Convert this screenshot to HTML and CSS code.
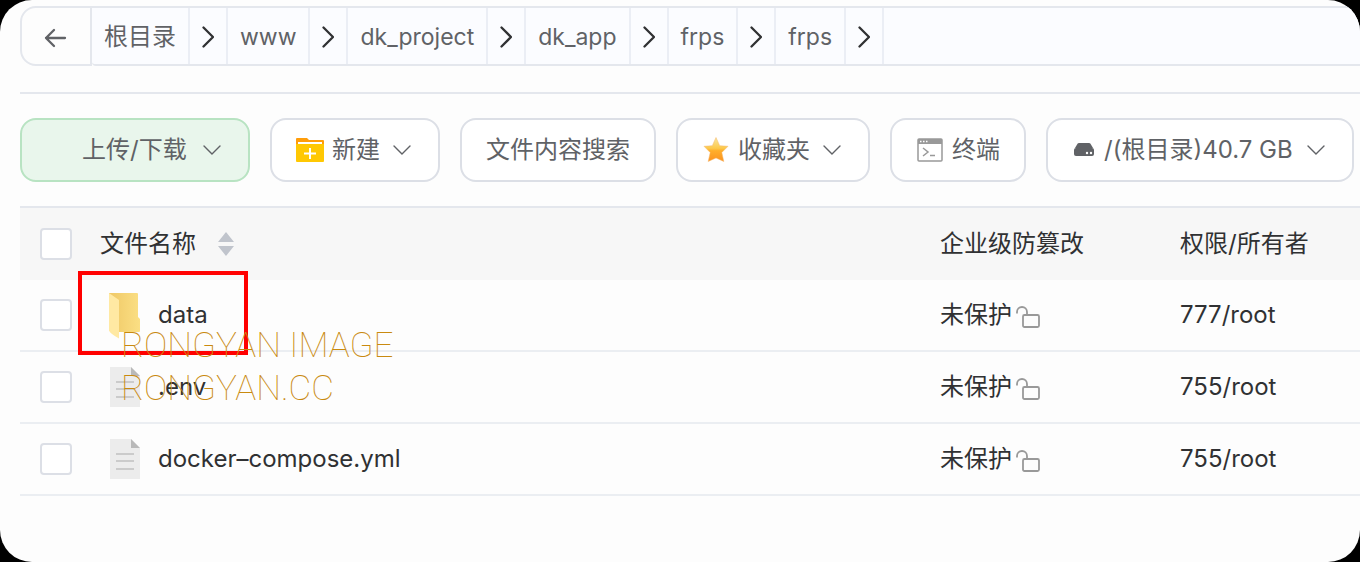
FILE: index.html
```
<!DOCTYPE html>
<html lang="zh-CN">

<head>
	<meta charset="utf-8">
	<meta name="viewport" content="width=device-width, initial-scale=1">
	<title>文件</title>
	<link rel="stylesheet" href="styles.css">
</head>

<body>
	<!-- shared icons -->
	<svg class="sprite" aria-hidden="true">
		<symbol id="down" viewBox="0 0 24 24"><path d="M4 8l8 8 8-8" fill="none" stroke="#606266" stroke-width="1.400" stroke-linecap="round" /></symbol>
		<symbol id="next" viewBox="0 0 12 24"><path d="M1.500 2.500l9.500 9.500-9.500 9.500" fill="none" stroke="#303133" stroke-width="2.300" stroke-linecap="round" stroke-linejoin="round" /></symbol>
		<symbol id="unlock" viewBox="0 0 26 24"><path d="M2 8.500V7a5 5 0 0 1 10 0v3M8 11.500q0-1.500 1.500-1.500h13q1.500 0 1.500 1.500v9q0 1.500-1.500 1.500h-13q-1.500 0-1.500-1.500z" fill="none" stroke="#999" stroke-width="1.800" /></symbol>
		<symbol id="file" viewBox="0 0 34 48">
			<path d="M2 4h21l9 9v31H2z" fill="#ececec" />
			<path d="M23 4l9 9h-9z" fill="#b9b9b9" />
			<path d="M8 19h18M8 26h18M8 34h18" stroke="#cbcbcb" stroke-width="2" />
		</symbol>
	</svg>

	<main class="panel">
		<nav class="path">
			<button class="back" aria-label="返回">
				<svg width="24" height="20" viewBox="0 0 24 20"><path d="M10 2L2 10l8 8M2 10h19" fill="none" stroke="#606266" stroke-width="2.300" stroke-linecap="round" stroke-linejoin="round" /></svg>
			</button>
			<div class="crumbs">
				<a class="root" href="#">根目录</a><span><svg><use href="#next" /></svg></span>
				<a href="#">www</a><span><svg><use href="#next" /></svg></span>
				<a href="#">dk_project</a><span><svg><use href="#next" /></svg></span>
				<a href="#">dk_app</a><span><svg><use href="#next" /></svg></span>
				<a href="#">frps</a><span><svg><use href="#next" /></svg></span>
				<a href="#">frps</a><span><svg><use href="#next" /></svg></span>
			</div>
		</nav>

		<div class="toolbar">
			<button class="btn upload"><i class="icon"></i>上传/下载<svg class="arrow"><use href="#down" /></svg></button>
			<button class="btn">
				<svg class="icon" viewBox="0 0 28 24">
					<path d="M0 1q0-1 1-1h10l2 2h14q1 0 1 1v8H0z" fill="#ff9d0a" />
					<path d="M2 4h24v4H2z" fill="#fff" />
					<path d="M0 6h28v17q0 1-1 1H1q-1 0-1-1z" fill="#ffc803" />
					<path d="M14 10v11M8 15.500h12" stroke="#fff" stroke-width="2" />
				</svg>新建<svg class="arrow"><use href="#down" /></svg>
			</button>
			<button class="btn">文件内容搜索</button>
			<button class="btn">
				<svg class="icon star" viewBox="0 0 28 28">
					<defs><linearGradient id="gold" x2="0" y2="1"><stop offset="0" stop-color="#f8e7a0" /><stop offset=".45" stop-color="#fcc94b" /><stop offset=".55" stop-color="#ffae2b" /><stop offset="1" stop-color="#fb9220" /></linearGradient></defs>
					<path d="M14 1.500l3.700 8.200 8.300.6-6.200 6.200 2 9-7.800-3.600-7.800 3.600 2-9L2 10.300l8.300-.6z" fill="url(#gold)" stroke="#f5b76b" stroke-opacity=".5" stroke-linejoin="round" />
				</svg>收藏夹<svg class="arrow"><use href="#down" /></svg>
			</button>
			<button class="btn">
				<svg class="icon" viewBox="0 0 28 24">
					<rect x="2" y="1" width="24" height="22" rx="1" fill="#fff" stroke="#999" stroke-width="1.500" />
					<path d="M2 1h24v5H2z" fill="#999" />
					<path d="M4 3.500h1.500M7 3.500h1.500M10 3.500h1.500" stroke="#fff" stroke-width="1.500" />
					<path d="M7 10l5 4-5 4M14 17.500h5" fill="none" stroke="#999" stroke-width="1.500" />
				</svg>终端
			</button>
			<button class="btn drive">
				<svg class="icon disk" viewBox="0 0 24 24">
					<path d="M7 5h10q1 0 1.500.8l2.500 4.200H3l2.500-4.200Q6 5 7 5z" fill="#606266" />
					<path d="M4 10h16q2 0 2 2v4q0 2-2 2H4q-2 0-2-2v-4q0-2 2-2z" fill="#606266" />
					<circle cx="15" cy="15" r="1.200" fill="#fff" /><circle cx="19" cy="15" r="1.200" fill="#fff" />
				</svg>/(根目录)40.7 GB<svg class="arrow"><use href="#down" /></svg>
			</button>
		</div>

		<div class="files">
			<table>
				<thead>
					<tr>
						<th class="check"><input type="checkbox" aria-label="全选"></th>
						<th><div class="sort">文件名称<svg width="16" height="24" viewBox="0 0 16 24"><path d="M8 0l8 10H0zM0 14h16l-8 10z" fill="#c0c4cc" /></svg></div></th>
						<th class="protect">企业级防篡改</th>
						<th class="owner">权限/所有者</th>
					</tr>
				</thead>
				<tbody>
					<tr>
						<td class="check"><input type="checkbox" id="f1"></td>
						<td><label class="name" for="f1">
							<svg viewBox="0 0 34 48">
								<defs><linearGradient id="fold"><stop offset="0" stop-color="#efc866" /><stop offset="1" stop-color="#fbdf84" /></linearGradient></defs>
								<path d="M1 2h28q1 0 1 1v23l2 2v12q0 1-1 1H11L1 30z" fill="url(#fold)" />
								<path d="M1 2l10 7v38.500q-9-5-10-8z" fill="#ffe9a3" />
							</svg>data</label></td>
						<td><div class="state">未保护<svg><use href="#unlock" /></svg></div></td>
						<td>777/root</td>
					</tr>
					<tr>
						<td class="check"><input type="checkbox" id="f2"></td>
						<td><label class="name" for="f2"><svg><use href="#file" /></svg>.env</label></td>
						<td><div class="state">未保护<svg><use href="#unlock" /></svg></div></td>
						<td>755/root</td>
					</tr>
					<tr>
						<td class="check"><input type="checkbox" id="f3"></td>
						<td><label class="name" for="f3"><svg><use href="#file" /></svg>docker–compose.yml</label></td>
						<td><div class="state">未保护<svg><use href="#unlock" /></svg></div></td>
						<td>755/root</td>
					</tr>
				</tbody>
			</table>
			<div class="highlight"></div>
			<div class="watermark">RONGYAN IMAGE<br>RONGYAN.CC</div>
		</div>
	</main>
</body>

</html>
```

FILE: styles.css
```
* {
	box-sizing: border-box;
}

body {
	margin: 0;
	background: #000;
	color: #303133;
	font-family: Inter, "Noto Sans CJK SC", sans-serif;
	font-size: 24px;
	line-height: 36px;
}

svg {
	display: block;
	flex: none;
}

.sprite {
	position: absolute;
	width: 0;
	height: 0;
}

.panel {
	min-height: 100vh;
	padding: 6px 0 66px 20px;
	background: #fdfdfd;
	border-radius: 32px;
	overflow: hidden;
}

/* path bar */
.path {
	display: flex;
	height: 60px;
}

.back {
	display: flex;
	align-items: center;
	justify-content: center;
	width: 72px;
	padding: 4px 0 0;
	background: #fdfdfd;
	border: 2px solid #e4e7ed;
	border-radius: 16px 0 0 16px;
	cursor: pointer;
}

.crumbs {
	display: flex;
	flex: 1;
	background: #fbfcff;
	border: solid #e4e7ed;
	border-width: 2px 0;
	border-radius: 0 0 0 4px;
	font-size: 23px;
}

.crumbs a,
.crumbs span {
	display: flex;
	align-items: center;
	padding: 2px 12px 0;
	border-right: 2px solid #ebeef5;
	color: #606266;
	text-decoration: none;
}

.crumbs .root {
	font-size: 24px;
}

.crumbs svg {
	width: 12px;
	height: 24px;
}

/* buttons */
.toolbar {
	display: flex;
	gap: 20px;
	margin-top: 26px;
	padding: 24px 0;
	border-top: 2px solid #e4e7ed;
	border-bottom: 2px solid #e4e7ed;
}

.btn {
	display: flex;
	align-items: center;
	flex: none;
	height: 64px;
	padding: 0 24px;
	background: #fff;
	border: 2px solid #dcdfe6;
	border-radius: 16px;
	color: #606266;
	font: inherit;
	white-space: nowrap;
	cursor: pointer;
}

.upload {
	min-width: 230px;
	background: #e9f6ec;
	border-color: #b8e3c2;
}

.drive {
	min-width: 308px;
}

.upload .arrow,
.drive .arrow {
	margin-left: auto;
}

.icon {
	width: 28px;
	height: 24px;
	margin-right: 8px;
}

.star {
	height: 28px;
}

.disk {
	width: 24px;
}

.arrow {
	width: 24px;
	height: 24px;
	margin-left: 10px;
}

/* file list */
.files {
	position: relative;
}

table {
	width: 100%;
	table-layout: fixed;
	border-collapse: separate;
	border-spacing: 0;
}

th,
td {
	height: 72px;
	padding: 0 0 0 20px;
	text-align: left;
	font-weight: normal;
	white-space: nowrap;
}

th {
	background: #f7f7f7;
}

td {
	border-bottom: 2px solid #ebeef2;
}

.check {
	width: 60px;
}

.protect {
	width: 240px;
}

.owner {
	width: 200px;
}

input[type="checkbox"] {
	appearance: none;
	display: block;
	width: 32px;
	height: 32px;
	margin: 0;
	background: #fff;
	border: 2px solid #dcdfe6;
	border-radius: 4px;
}

.sort {
	display: flex;
	align-items: center;
	gap: 22px;
}

.name {
	display: flex;
	align-items: center;
	gap: 16px;
	padding-left: 8px;
}

.name svg {
	width: 34px;
	height: 48px;
}

.state {
	display: flex;
	align-items: center;
	gap: 3px;
}

.state svg {
	width: 26px;
	height: 24px;
	margin-top: 4px;
}

/* marks over the list */
.highlight {
	position: absolute;
	top: 63px;
	left: 58px;
	width: 170px;
	height: 84px;
	border: 4px solid #f00;
}

.watermark {
	position: absolute;
	top: 116px;
	left: 101px;
	color: #c98a10;
	font-family: Roboto, sans-serif;
	font-size: 35px;
	font-weight: 100;
	line-height: 43px;
	pointer-events: none;
}
```
